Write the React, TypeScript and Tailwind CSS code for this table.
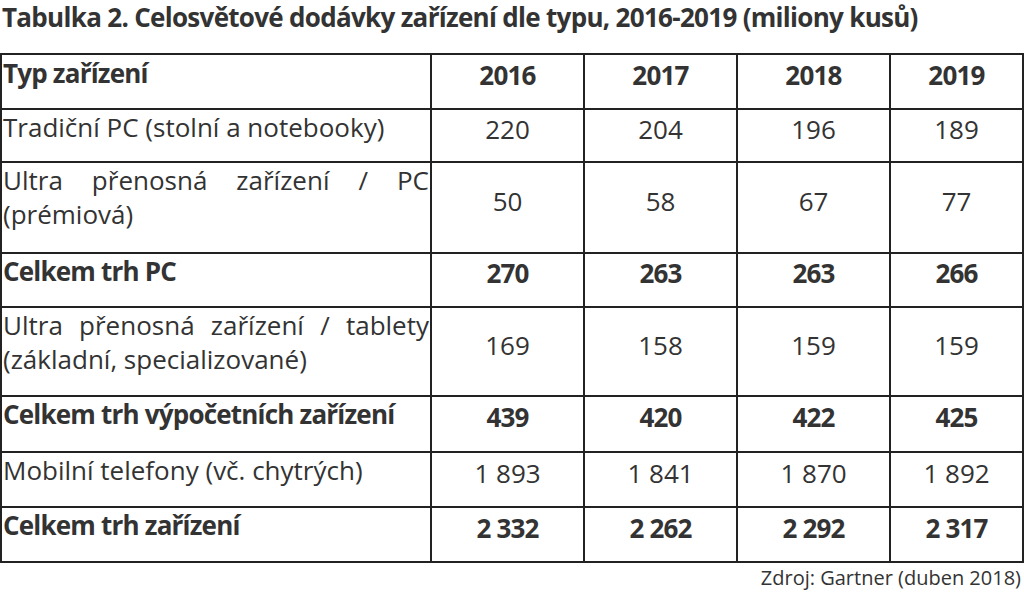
type Row = {
  label: string[];
  values: string[];
  bold?: boolean;
  h: string;
};

const rows: Row[] = [
  { label: ['Tradiční PC (stolní a notebooky)'], values: ['220', '204', '196', '189'], h: 'h-[53px]' },
  { label: ['Ultra přenosná zařízení / PC', '(prémiová)'], values: ['50', '58', '67', '77'], h: 'h-[91px]' },
  { label: ['Celkem trh PC'], values: ['270', '263', '263', '266'], bold: true, h: 'h-[54px]' },
  {
    label: ['Ultra přenosná zařízení / tablety', '(základní, specializované)'],
    values: ['169', '158', '159', '159'],
    h: 'h-[89px]',
  },
  { label: ['Celkem trh výpočetních zařízení'], values: ['439', '420', '422', '425'], bold: true, h: 'h-[56px]' },
  { label: ['Mobilní telefony (vč. chytrých)'], values: ['1 893', '1 841', '1 870', '1 892'], h: 'h-[55px]' },
  { label: ['Celkem trh zařízení'], values: ['2 332', '2 262', '2 292', '2 317'], bold: true, h: 'h-[55px]' },
];

const years = ['2016', '2017', '2018', '2019'];

export default function App() {
  return (
    <div className="w-[1024px] h-[608px] bg-white text-[#333] font-['Open_Sans',sans-serif] overflow-hidden">
      <h1 className="text-[26px] leading-[34px] font-bold tracking-[-0.7px] pl-[2px] mb-[19px]">
        Tabulka 2. Celosvětové dodávky zařízení dle typu, 2016-2019 (miliony kusů)
      </h1>
      <table className="border-collapse table-fixed w-[1022px] text-[26px] leading-[34px]">
        <colgroup>
          <col className="w-[430px]" />
          <col className="w-[153px]" />
          <col className="w-[153px]" />
          <col className="w-[153px]" />
          <col className="w-[133px]" />
        </colgroup>
        <thead>
          <tr className="h-[55px]">
            <th className="border-2 border-[#222] text-left align-top pl-[1px] pt-[1px] font-bold tracking-[-0.8px]">
              Typ zařízení
            </th>
            {years.map((y) => (
              <th key={y} className="border-2 border-[#222] text-center align-middle pb-[14px] font-bold tracking-[-0.8px]">
                {y}
              </th>
            ))}
          </tr>
        </thead>
        <tbody>
          {rows.map((r, i) => (
            <tr key={i} className={r.h}>
              <td
                className={`border-2 border-[#222] align-top pl-[1px] pr-[1px] pt-[0px] ${
                  r.bold ? 'font-bold tracking-[-0.8px]' : ''
                }`}
              >
                {r.label.length > 1 ? (
                  <>
                    <div className="text-justify [text-align-last:justify]">{r.label[0]}</div>
                    <div>{r.label[1]}</div>
                  </>
                ) : (
                  r.label[0]
                )}
              </td>
              {r.values.map((v, j) => (
                <td
                  key={j}
                  className={`border-2 border-[#222] text-center align-middle pb-[14px] ${
                    r.bold ? 'font-bold tracking-[-0.8px]' : ''
                  }`}
                >
                  {v}
                </td>
              ))}
            </tr>
          ))}
        </tbody>
      </table>
      <p className="text-right text-[20px] leading-[26px] pr-[3px] mt-[2px]">Zdroj: Gartner (duben 2018)</p>
    </div>
  );
}
